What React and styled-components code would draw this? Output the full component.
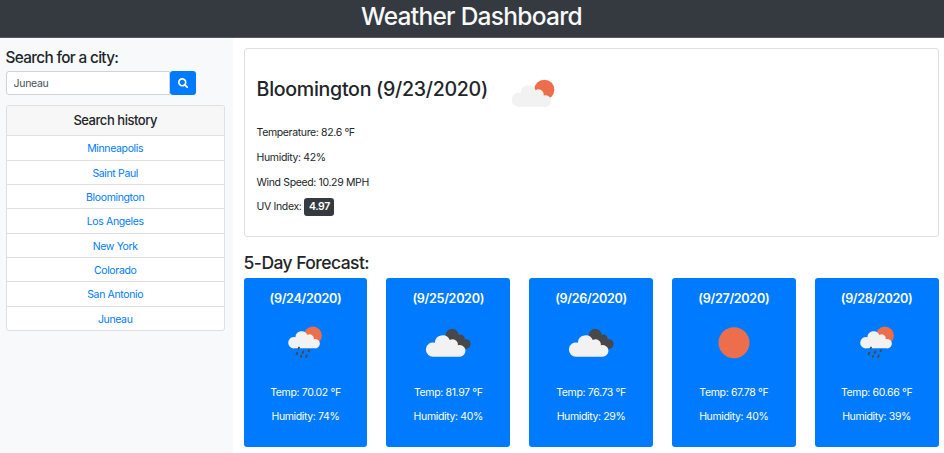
import React from "react";
import styled, { createGlobalStyle } from "styled-components";

const GlobalStyle = createGlobalStyle`
  *, *::before, *::after { box-sizing: border-box; }
  html, body { height: 100%; overflow: hidden; }
  body {
    margin: 0;
    background: #fff;
    color: #212529;
    font: 400 10.5px/16px Inter, "Liberation Sans", sans-serif;
    letter-spacing: -0.36px;
  }
  h1, h2, h3, h4, p, ul { margin: 0; padding: 0; }
`;

const Page = styled.div`
  display: flex;
  flex-direction: column;
  height: 453px;
`;

const Header = styled.header`
  flex: none;
  height: 38px;
  background: #343a40;
  border-bottom: 1px solid #55595e;
  text-align: center;
`;

const Title = styled.h1`
  color: #f8f9fa;
  font-size: 24.5px;
  font-weight: 550;
  line-height: 33px;
  letter-spacing: -0.72px;
  padding-right: 1px;
`;

const Columns = styled.div`
  flex: 1;
  min-height: 0;
  display: grid;
  grid-template-columns: 233.4px 1fr;
`;

const Sidebar = styled.aside`
  background: #f8f9fa;
  padding: 11px 8.6px 0 5.6px;
`;

const SectionTitle = styled.h3`
  font-size: ${(p) => p.$size}px;
  font-weight: 550;
  line-height: ${(p) => p.$line}px;
  letter-spacing: ${(p) => p.$spacing}px;
`;

const SearchForm = styled.form`
  display: flex;
  margin-top: 4.6px;
`;

const SearchInput = styled.input`
  width: 164px;
  height: 24.4px;
  padding: 1px 7px 0;
  border: 1px solid #ced4da;
  border-radius: 3px 0 0 3px;
  background: #fff;
  color: #495057;
  font: 400 10.5px Inter, "Liberation Sans", sans-serif;
  letter-spacing: -0.3px;
  outline: none;
`;

const SearchButton = styled.button`
  display: grid;
  place-items: center;
  width: 26.5px;
  height: 24.4px;
  padding: 0;
  border: 0;
  border-radius: 3px;
  background: #007bff;
  color: #fff;
`;

const HistoryCard = styled.section`
  margin-top: 10.4px;
  border: 1px solid #dfdfdf;
  border-radius: 3px;
  background: #fff;
  text-align: center;
  overflow: hidden;
`;

const HistoryHeading = styled.h4`
  height: 29px;
  background: #f7f7f7;
  font-size: 13px;
  font-weight: 550;
  line-height: 28.5px;
  letter-spacing: -0.46px;
`;

const HistoryItem = styled.li`
  height: 24.33px;
  border-top: 1px solid #dfdfdf;
  color: #007bff;
  line-height: 25.4px;
  list-style: none;
`;

const Main = styled.main`
  padding: 10px 5.5px 0 10.2px;
`;

const CurrentCard = styled.section`
  height: 189px;
  padding: 23px 12px 0;
  border: 1px solid #dfdfdf;
  border-radius: 3px;
`;

const CurrentHeading = styled.div`
  display: flex;
  align-items: flex-start;
  height: 36px;
  margin-bottom: 17.2px;
`;

const CityName = styled.h2`
  width: 243.8px;
  padding-top: 5px;
  font-size: 19.6px;
  font-weight: 550;
  line-height: 24px;
  letter-spacing: -0.3px;
  white-space: nowrap;
`;

const Reading = styled.p`
  height: 24.7px;
  line-height: 16px;
`;

const UvRow = styled(Reading)`
  display: flex;
  align-items: center;
  gap: 3px;
  height: 17.5px;
  margin-top: -0.9px;
`;

const UvBadge = styled.span`
  width: 30px;
  height: 17.5px;
  border-radius: 3px;
  background: #343a40;
  color: #fff;
  font-weight: 600;
  line-height: 17.5px;
  text-align: center;
`;

const Forecast = styled.section`
  margin-top: 15px;
`;

const ForecastGrid = styled.div`
  display: grid;
  grid-template-columns: repeat(5, 1fr);
  gap: 19px;
  margin-top: 4px;
`;

const DayCard = styled.article`
  display: flex;
  flex-direction: column;
  align-items: center;
  height: 168.5px;
  padding-top: 13px;
  border-radius: 3px;
  background: #007bff;
  color: #fff;
`;

const DayDate = styled.h4`
  font-size: 12.6px;
  font-weight: 600;
  line-height: 16px;
  letter-spacing: -0.32px;
`;

const DayIcon = styled.div`
  height: 50px;
  margin: 8px 0 19.5px;
`;

const DayReading = styled.p`
  height: 24.5px;
`;

const SUN = "#ec6e4c";
const DARK = "#48484a";

const Cloud = () => (
  <path
    fill="#f2f2f2"
    d="M71 125A21.500 21.500 0 1 1 73 83A23.500 23.500 0 0 1 118 75A16 16 0 0 1 142 91A17.500 17.500 0 1 1 145 125Z"
  />
);

const PartlyCloudy = () => (
  <svg width="70" height="50" viewBox="0 6 210 150">
    <circle cx="133" cy="59" r="30" fill={SUN} />
    <g transform="translate(-11 -14.500)"><Cloud /></g>
  </svg>
);

const Overcast = () => (
  <svg width="70" height="50" viewBox="7.500 0 210 150">
    <g fill={DARK}>
      <circle cx="125" cy="61" r="19.500" />
      <circle cx="150" cy="71" r="12.500" />
      <circle cx="166" cy="87" r="14.500" />
      <path d="M120 65L150 70L160 90L166 101L145 100Z" />
    </g>
    <Cloud />
  </svg>
);

const Rain = () => (
  <svg width="70" height="50" viewBox="0 0 210 150">
    <circle cx="128.500" cy="61.500" r="27" fill={SUN} />
    <g transform="translate(17.800 0) scale(.8)"><Cloud /></g>
    <g stroke={DARK} strokeWidth="5.500" strokeLinecap="round">
      <path d="M87 97.500L86 100M82 113L79.500 118M100 109L97.500 114M117.500 106L115.500 109M94 122.500L92.500 125M110.500 121L108 126" />
    </g>
  </svg>
);

const Clear = () => (
  <svg width="70" height="50" viewBox="0 0 210 150">
    <circle cx="105" cy="83" r="46.500" fill={SUN} />
  </svg>
);

const SearchIcon = () => (
  <svg width="10.500" height="10.500" viewBox="0 0 512 512" fill="currentColor">
    <path d="M505 442.700L405.300 343c-4.500-4.500-10.600-7-17-7H372c27.600-35.300 44-79.700 44-128C416 93.100 322.900 0 208 0S0 93.100 0 208s93.100 208 208 208c48.300 0 92.700-16.400 128-44v16.300c0 6.400 2.500 12.500 7 17l99.700 99.700c9.400 9.400 24.600 9.400 33.900 0l28.300-28.300c9.400-9.400 9.400-24.600.1-34zM208 336c-70.700 0-128-57.200-128-128 0-70.700 57.200-128 128-128 70.700 0 128 57.200 128 128 0 70.700-57.200 128-128 128z" />
  </svg>
);

const history = [
  "Minneapolis", "Saint Paul", "Bloomington", "Los Angeles",
  "New York", "Colorado", "San Antonio", "Juneau",
];

const days = [
  { date: "9/24/2020", Icon: Rain, temp: "70.02", humidity: 74 },
  { date: "9/25/2020", Icon: Overcast, temp: "81.97", humidity: 40 },
  { date: "9/26/2020", Icon: Overcast, temp: "76.73", humidity: 29 },
  { date: "9/27/2020", Icon: Clear, temp: "67.78", humidity: 40 },
  { date: "9/28/2020", Icon: Rain, temp: "60.66", humidity: 39 },
];

export default function App() {
  return (
    <Page>
      <GlobalStyle />
      <Header><Title>Weather Dashboard</Title></Header>
      <Columns>
        <Sidebar>
          <SectionTitle $size={15.3} $line={17} $spacing={-0.65}>Search for a city:</SectionTitle>
          <SearchForm onSubmit={(e) => e.preventDefault()}>
            <SearchInput defaultValue="Juneau" aria-label="City" />
            <SearchButton aria-label="Search"><SearchIcon /></SearchButton>
          </SearchForm>
          <HistoryCard>
            <HistoryHeading>Search history</HistoryHeading>
            <ul>{history.map((city) => <HistoryItem key={city}>{city}</HistoryItem>)}</ul>
          </HistoryCard>
        </Sidebar>
        <Main>
          <CurrentCard>
            <CurrentHeading>
              <CityName>Bloomington (9/23/2020)</CityName>
              <PartlyCloudy />
            </CurrentHeading>
            <Reading>Temperature: 82.6 °F</Reading>
            <Reading>Humidity: 42%</Reading>
            <Reading>Wind Speed: 10.29 MPH</Reading>
            <UvRow>UV Index: <UvBadge>4.97</UvBadge></UvRow>
          </CurrentCard>
          <Forecast>
            <SectionTitle $size={17.5} $line={22} $spacing={-0.55}>5-Day Forecast:</SectionTitle>
            <ForecastGrid>
              {days.map(({ date, Icon, temp, humidity }) => (
                <DayCard key={date}>
                  <DayDate>({date})</DayDate>
                  <DayIcon><Icon /></DayIcon>
                  <DayReading>Temp: {temp} °F</DayReading>
                  <DayReading>Humidity: {humidity}%</DayReading>
                </DayCard>
              ))}
            </ForecastGrid>
          </Forecast>
        </Main>
      </Columns>
    </Page>
  );
}
